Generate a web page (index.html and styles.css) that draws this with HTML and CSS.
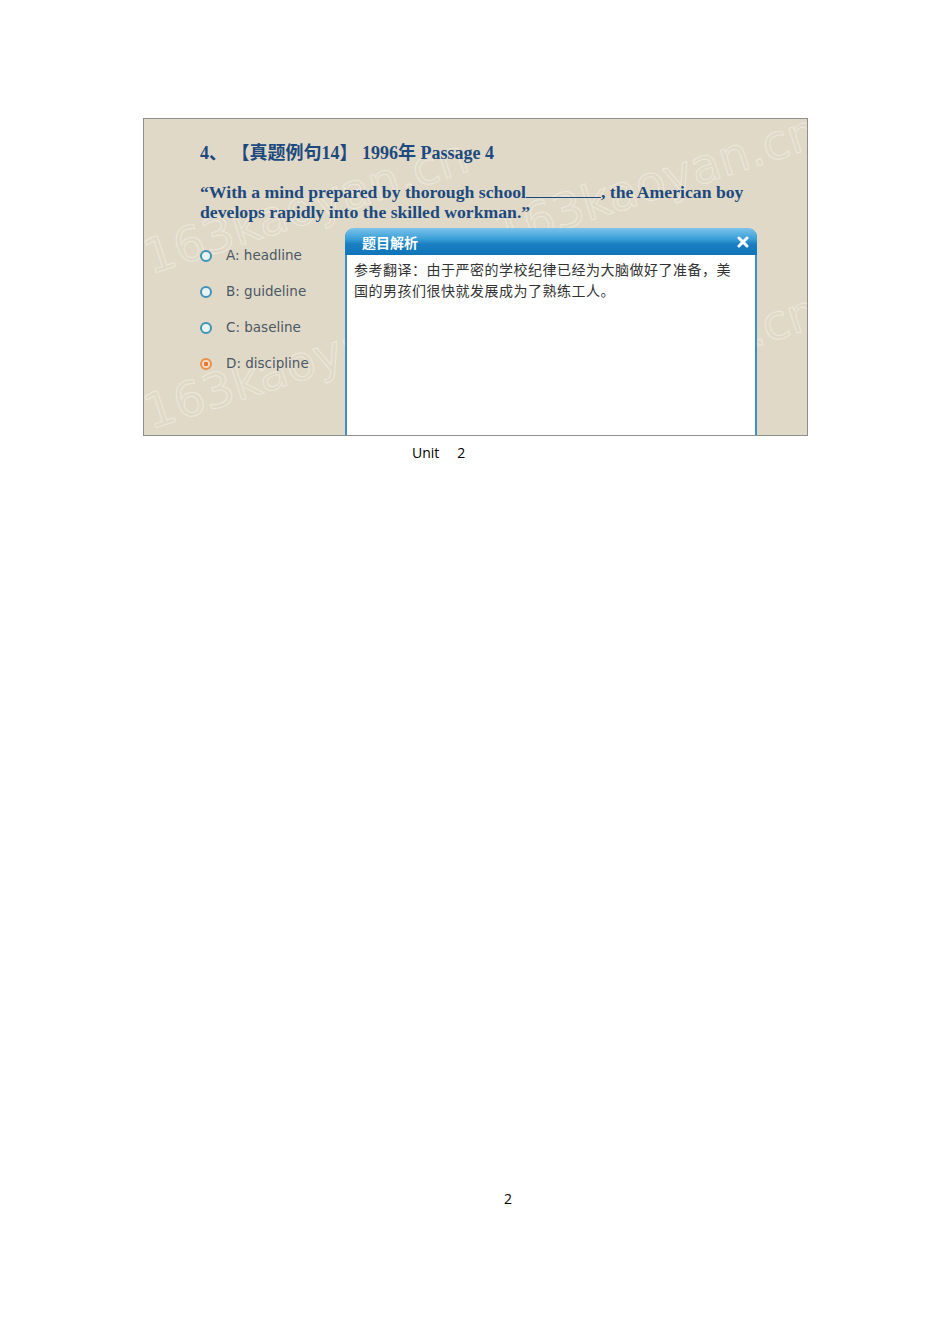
FILE: index.html
```html
<!DOCTYPE html>
<html lang="zh">
<head>
<meta charset="utf-8">
<title>Unit 2</title>
<link rel="stylesheet" href="styles.css">
</head>
<body>
<div class="page">
  <div class="shot">
    <span class="wm wm1">163kaoyan.cn</span>
    <span class="wm wm2">163kaoyan.cn</span>
    <span class="wm wm3">163kaoyan.cn</span>
    <span class="wm wm4">163kaoyan.cn</span>
    <div class="title">4、 【真题例句14】 1996年 Passage 4</div>
    <div class="quote">“With a mind prepared by thorough school<span class="blank"></span>, the American boy develops rapidly into the skilled workman.”</div>
    <div class="row">
      <div class="options">
        <div class="opt"><span class="radio"></span><span class="label">A: headline</span></div>
        <div class="opt"><span class="radio"></span><span class="label">B: guideline</span></div>
        <div class="opt"><span class="radio"></span><span class="label">C: baseline</span></div>
        <div class="opt"><span class="radio on"></span><span class="label">D: discipline</span></div>
      </div>
      <div class="popup">
        <div class="popup-head">
          <span class="popup-title">题目解析</span>
          <svg class="close" width="12" height="12" viewBox="0 0 12 12"><path d="M2 2 L10 10 M10 2 L2 10" stroke="#fff" stroke-width="3" stroke-linecap="round"/></svg>
        </div>
        <div class="popup-body">参考翻译：由于严密的学校纪律已经为大脑做好了准备，美国的男孩们很快就发展成为了熟练工人。</div>
      </div>
    </div>
  </div>
  <div class="caption">Unit<span class="gap"></span>2</div>
  <div class="pagenum">2</div>
</div>
</body>
</html>
```
FILE: styles.css
```css
html, body { margin: 0; padding: 0; background: #fff; }
.page { padding-top: 118px; width: 950px; }
.shot {
  position: relative;
  margin-left: 143px;
  width: 663px;
  height: 316px;
  border: 1px solid #8e8e8a;
  background: #e1d9c7;
  overflow: hidden;
}
.wm {
  position: absolute;
  font-family: "DejaVu Sans", sans-serif;
  font-size: 48px;
  color: transparent;
  -webkit-text-stroke: 1px rgba(255,255,255,0.4);
  transform: rotate(-18deg);
  transform-origin: left bottom;
  white-space: nowrap;
  pointer-events: none;
}
.wm1 { left: 10px; top: 110px; }
.wm2 { left: 360px; top: 85px; }
.wm3 { left: 10px; top: 265px; }
.wm4 { left: 360px; top: 265px; }
.title {
  position: relative;
  margin: 24px 0 0 56px;
  font-family: "Liberation Serif", "Noto Sans CJK SC", serif;
  font-weight: bold;
  font-size: 18px;
  line-height: 20px;
  color: #1d4a7e;
  white-space: pre;
}
.quote {
  position: relative;
  margin: 19px 40px 0 56px;
  font-family: "Liberation Serif", serif;
  font-weight: bold;
  font-size: 17.7px;
  line-height: 20px;
  color: #1d4a7e;
}
.blank {
  display: inline-block;
  width: 75px;
  height: 14px;
  border-bottom: 1px solid #1d4a7e;
  vertical-align: baseline;
}
.row { position: relative; display: flex; margin-top: 6px; }
.options { width: 145px; margin-left: 56px; padding-top: 9px; }
.opt { display: flex; align-items: center; height: 36px; }
.radio {
  width: 8px; height: 8px;
  border: 2.5px solid #3e93b8;
  border-radius: 50%;
  background: #e9f3f6;
  margin-right: 14px;
  margin-top: 1px;
}
.radio.on {
  border-color: #e8914a;
  background: radial-gradient(circle, #e07a33 0 2px, #f6dcc6 2.5px);
}
.label {
  font-family: "DejaVu Sans", sans-serif;
  font-size: 13.5px;
  color: #4b5866;
  white-space: pre;
}
.popup {
  width: 408px;
  height: 260px;
  border: 2px solid #3b8fc6;
  border-top: none;
  border-radius: 9px 9px 0 0;
  background: #fff;
  flex-shrink: 0;
}
.popup-head {
  height: 27px;
  margin: 0 -2px;
  border-radius: 9px 9px 0 0;
  background: linear-gradient(#7cc4ea 0%, #3b9fd8 40%, #1a7fc2 60%, #0f74b8 100%);
  display: flex;
  align-items: center;
  justify-content: space-between;
  padding: 0 8px 0 17px;
}
.popup-title {
  font-family: "Noto Sans CJK SC", sans-serif;
  font-size: 14px;
  font-weight: bold;
  color: #fff;
  line-height: 20px;
}
.close { display: block; }
.popup-body {
  padding: 4px 20px 0 7px;
  font-family: "Noto Sans CJK SC", sans-serif;
  font-size: 14px;
  letter-spacing: 0.5px;
  line-height: 21px;
  color: #333;
}
.caption {
  margin: 7px 0 0 412px;
  font-family: "Open Sans", "Liberation Sans", sans-serif;
  font-size: 14px;
  line-height: 20px;
  color: #000;
}
.gap { display: inline-block; width: 18px; }
.pagenum {
  margin: 726px 0 0 504px;
  font-family: "Open Sans", "Liberation Sans", sans-serif;
  font-size: 14px;
  line-height: 20px;
  color: #000;
}
```
